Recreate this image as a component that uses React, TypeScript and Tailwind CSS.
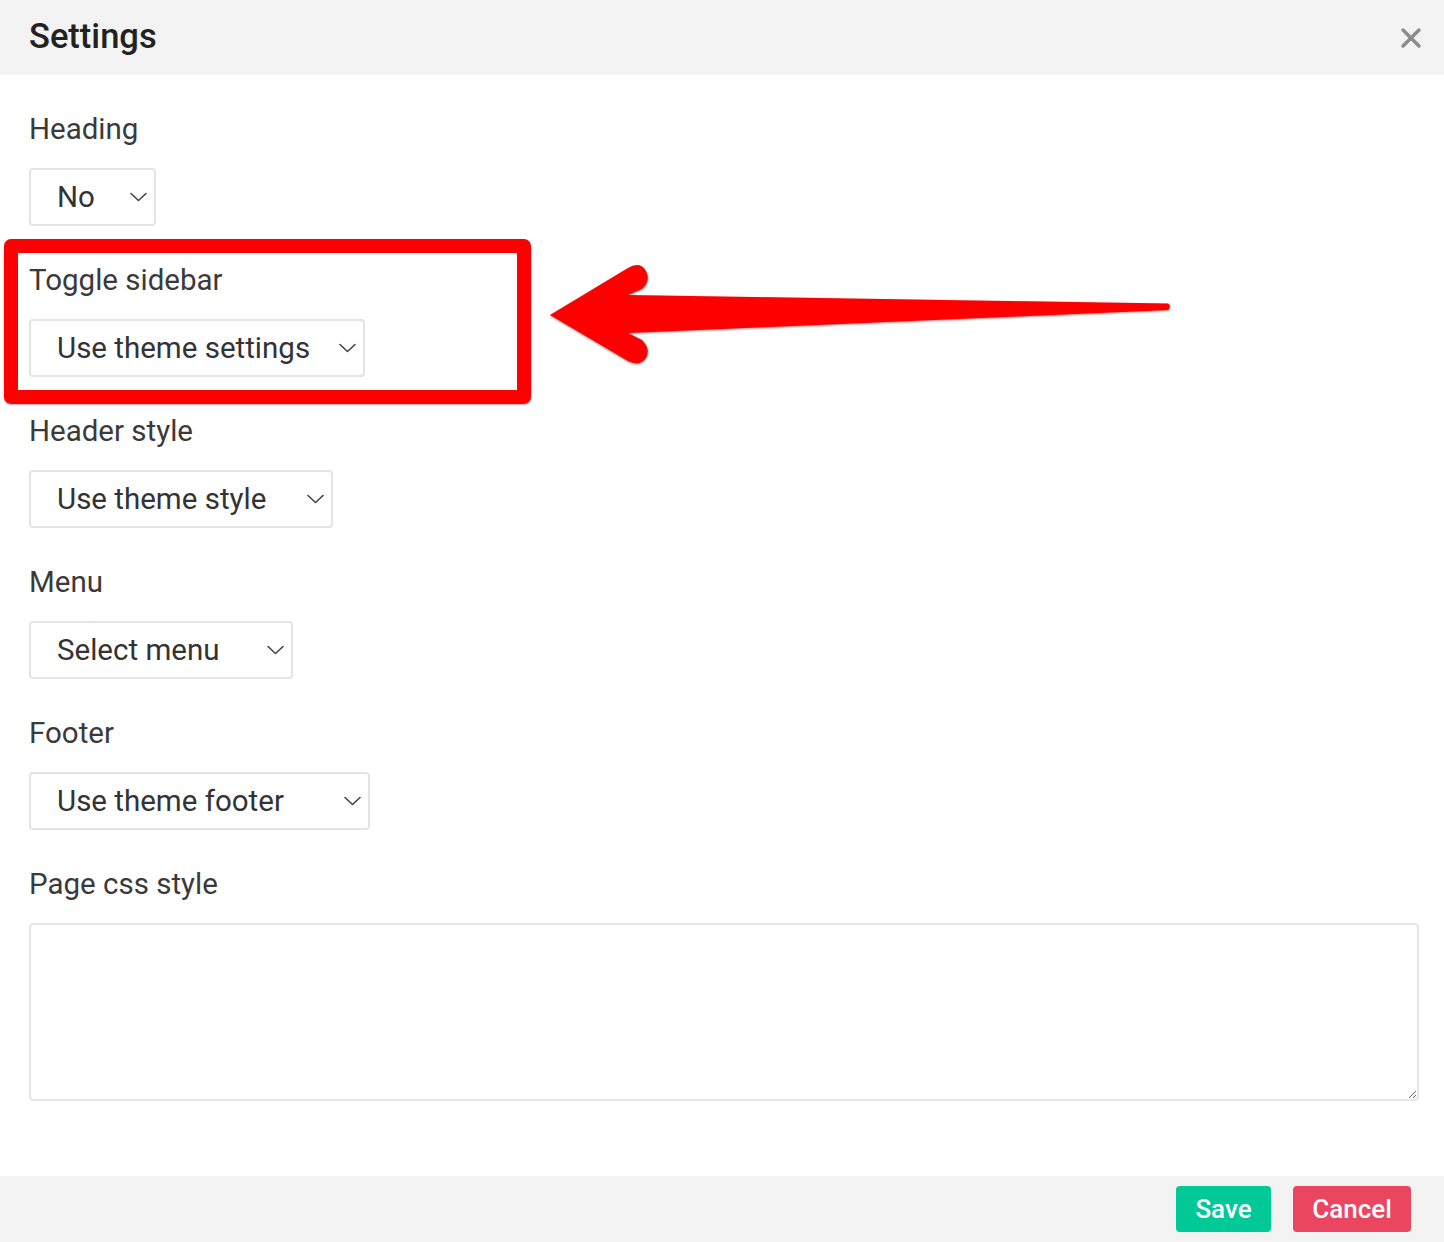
import { X } from "lucide-react";

interface SelectBoxProps {
  value: string;
  width: string;
}

const Chevron = () => (
  <svg width="17" height="10" viewBox="0 0 17 10" fill="none" className="shrink-0">
    <path d="M1 1.5 L8.5 8.5 L16 1.5" stroke="#444" strokeWidth="1.6" strokeLinecap="round" strokeLinejoin="round" />
  </svg>
);

const SelectBox: React.FC<SelectBoxProps> = ({ value, width }) => (
  <div
    className={`${width} h-[58px] mt-[18px] border-2 border-[#e4e4e4] rounded-[4px] bg-white flex items-center justify-between pl-[26px] pr-[7px] text-[29.5px] text-[#333]`}
  >
    <span>{value}</span>
    <Chevron />
  </div>
);

const Field: React.FC<{ label: string; children: React.ReactNode }> = ({ label, children }) => (
  <div className="mb-[33px]">
    <div className="text-[29.5px] leading-[42px] text-[#3a3a3a]">{label}</div>
    {children}
  </div>
);

const App = () => {
  return (
    <div
      className="relative w-full h-[1242px] bg-white flex flex-col overflow-hidden"
      style={{ fontFamily: "Roboto, 'Liberation Sans', sans-serif" }}
    >
      {/* Header */}
      <div className="h-[75px] shrink-0 bg-[#f3f3f3] flex items-center justify-between pl-[29px] pr-[17px]">
        <h1 className="text-[34.5px] font-medium text-[#222] leading-none -mt-[2px]">Settings</h1>
        <X className="w-[32px] h-[32px] text-[#8c8c8c]" strokeWidth={2.6} />
      </div>

      {/* Body */}
      <div className="flex-1 pl-[29px] pr-[25px] pt-[33px]">
        <Field label="Heading">
          <SelectBox value="No" width="w-[127px]" />
        </Field>
        <Field label="Toggle sidebar">
          <SelectBox value="Use theme settings" width="w-[336px]" />
        </Field>
        <Field label="Header style">
          <SelectBox value="Use theme style" width="w-[304px]" />
        </Field>
        <Field label="Menu">
          <SelectBox value="Select menu" width="w-[264px]" />
        </Field>
        <Field label="Footer">
          <SelectBox value="Use theme footer" width="w-[341px]" />
        </Field>
        <div>
          <div className="text-[29.5px] leading-[42px] text-[#3a3a3a]">Page css style</div>
          <textarea className="mt-[18px] block w-full h-[178px] border-2 border-[#e6e6e6] rounded-[4px] bg-white" />
        </div>
      </div>

      {/* Footer */}
      <div className="h-[66px] shrink-0 bg-[#f3f3f3] flex items-center justify-end gap-[22px] pr-[33px]">
        <button className="w-[95px] h-[46px] rounded-[4px] bg-[#00c896] text-white text-[26px] font-medium">
          Save
        </button>
        <button className="w-[118px] h-[46px] rounded-[4px] bg-[#eb4660] text-white text-[26px] font-medium">
          Cancel
        </button>
      </div>

      {/* Annotation: red box */}
      <div className="absolute left-[4px] top-[239px] w-[527px] h-[165px] border-[14px] border-[#ff0000] rounded-[7px] pointer-events-none shadow-[0_1px_2px_rgba(0,0,0,0.35)]" />

      {/* Annotation: arrow */}
      <svg
        className="absolute left-0 top-0 pointer-events-none"
        width="1444"
        height="1242"
        viewBox="0 0 1444 1242"
        style={{ filter: "drop-shadow(0 1px 1px rgba(0,0,0,0.45))" }}
      >
        <path
          d="M550 315 L628 268 Q640 261 646 271 Q651 281 642 289 L628 295 L1168 303.5 Q1172 306 1168 310 L628 333 L642 340 Q651 349 646 358 Q640 367 628 361 Z"
          fill="#ff0000"
        />
      </svg>
    </div>
  );
};

export default App;
